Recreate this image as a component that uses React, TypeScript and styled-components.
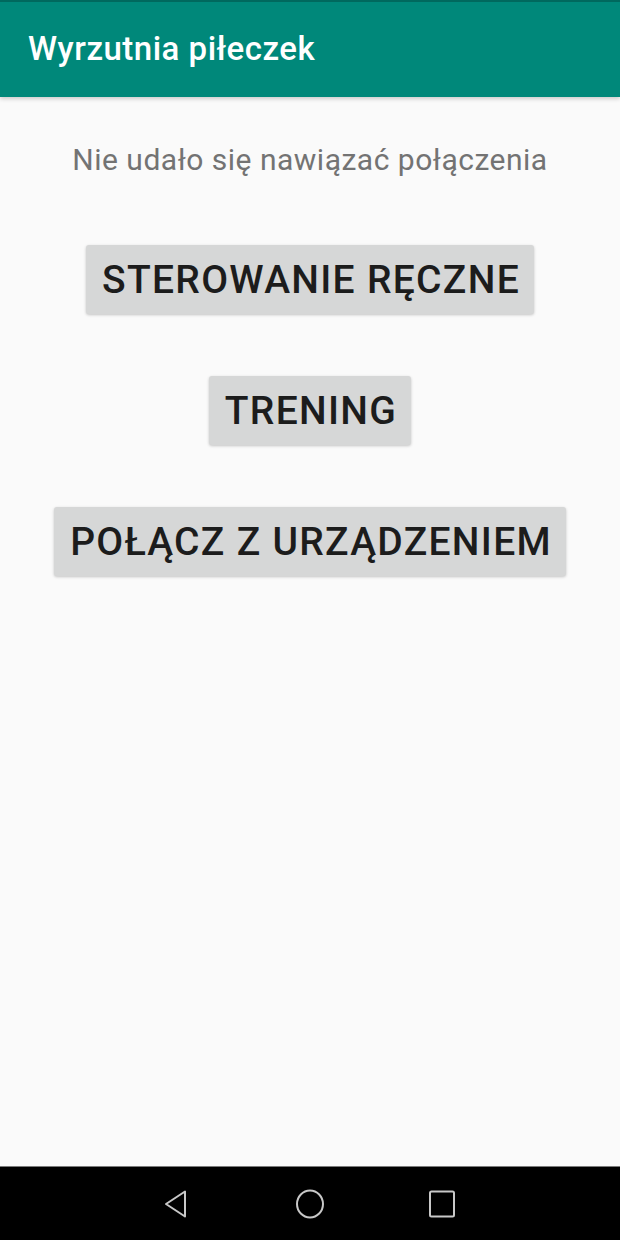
import React from "react";
import styled, { createGlobalStyle } from "styled-components";

const Global = createGlobalStyle`
  html, body { margin: 0; padding: 0; background: #fafafa; }
  body { font-family: Roboto, "Noto Sans", sans-serif; }
  * { box-sizing: border-box; }
`;

const Screen = styled.div`
  width: 620px;
  height: 1240px;
  display: flex;
  flex-direction: column;
  background: #fafafa;
  overflow: hidden;
`;

const AppBar = styled.header`
  height: 97px;
  flex: none;
  background: #00887a;
  border-top: 2px solid #00695e;
  display: flex;
  align-items: center;
  padding: 0 28px 2px;
  box-shadow: 0 2px 4px rgba(0, 0, 0, 0.18);
  position: relative;
  z-index: 1;
`;

const Title = styled.h1`
  margin: 0;
  font-family: Roboto, sans-serif;
  font-weight: 500;
  font-size: 33px;
  color: #ffffff;
  letter-spacing: 0.5px;
`;

const Content = styled.main`
  flex: 1;
  display: flex;
  flex-direction: column;
  align-items: center;
  padding-top: 43px;
`;

const Status = styled.p`
  margin: 0 0 65px;
  font-family: Roboto, sans-serif;
  font-size: 30px;
  letter-spacing: 0.5px;
  color: #737373;
  line-height: 40px;
`;

const Actions = styled.div`
  display: flex;
  flex-direction: column;
  align-items: center;
  gap: 62px;
`;

const Button = styled.button`
  height: 69px;
  padding: 0 14px 0 16px;
  border: none;
  border-radius: 3px;
  background: #d6d7d7;
  box-shadow: 0 1px 3px rgba(0, 0, 0, 0.22);
  font-family: Roboto, sans-serif;
  font-weight: 500;
  font-size: 39px;
  color: #1c1c1c;
  letter-spacing: 1.3px;
  cursor: pointer;
`;

const NavBar = styled.nav`
  height: 74px;
  flex: none;
  background: #000;
  border-top: 1px solid #7a7a7a;
  display: flex;
  align-items: center;
  justify-content: center;
  gap: 96px;
`;

const NavIcon = styled.svg`
  width: 36px;
  height: 36px;
  display: block;
`;

export default function App() {
  return (
    <Screen>
      <Global />
      <AppBar>
        <Title>Wyrzutnia piłeczek</Title>
      </AppBar>
      <Content>
        <Status>Nie udało się nawiązać połączenia</Status>
        <Actions>
          <Button>STEROWANIE RĘCZNE</Button>
          <Button>TRENING</Button>
          <Button>POŁĄCZ Z URZĄDZENIEM</Button>
        </Actions>
      </Content>
      <NavBar>
        <NavIcon viewBox="0 0 36 36">
          <path
            d="M25 5.5 L25 30.5 L6 18 Z"
            fill="none"
            stroke="#c8c8c8"
            strokeWidth="2"
            strokeLinejoin="round"
          />
        </NavIcon>
        <NavIcon viewBox="0 0 36 36">
          <ellipse cx="18" cy="18" rx="13" ry="13.5" fill="none" stroke="#c8c8c8" strokeWidth="2" />
        </NavIcon>
        <NavIcon viewBox="0 0 36 36">
          <rect x="6" y="5.5" width="24" height="25" rx="1.5" fill="none" stroke="#c8c8c8" strokeWidth="2" />
        </NavIcon>
      </NavBar>
    </Screen>
  );
}
